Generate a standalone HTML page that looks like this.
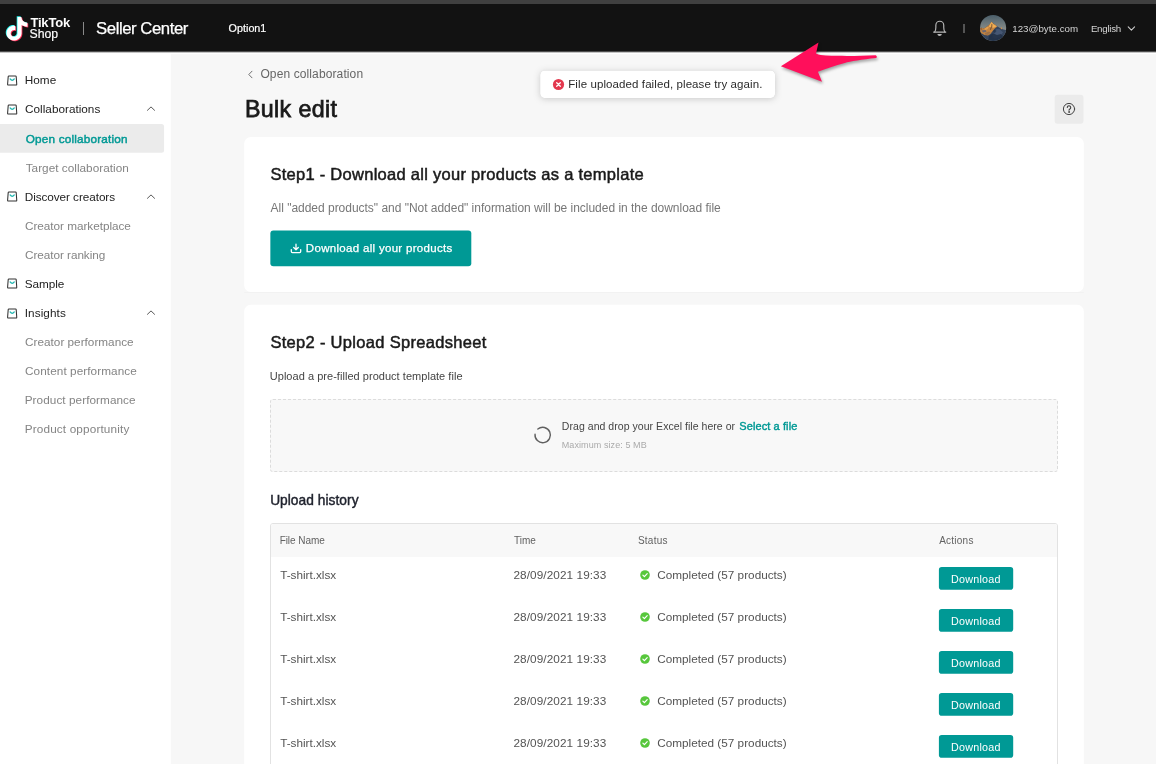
<!DOCTYPE html>
<html lang="en">
<head>
<meta charset="utf-8">
<title>Bulk edit - Seller Center</title>
<style>
*{box-sizing:border-box;margin:0;padding:0}
html,body{width:1156px;height:764px;overflow:hidden}
body{position:relative;background:#fff;font-family:"Liberation Sans",sans-serif;color:#222}
.a{position:absolute}
.t{position:absolute;white-space:pre}
.topstrip{left:0;top:0;width:1156px;height:4px;background:#404040}
.header{left:0;top:4px;width:1156px;height:47.3px;background:#121212}
.hedge{left:0;top:51.3px;width:1156px;height:1.7px;background:linear-gradient(#121212,#fff)}
.sidebar{left:0;top:52px;width:170.8px;height:712px;background:#fff}
.drop{left:270px;top:399px;width:788px;height:73px;background:#f8f8f8;border:1px dashed #dcdcdc;border-radius:3px}
.table{left:270px;top:523px;width:788px;height:260px;border:1px solid #e2e2e2;border-radius:3px;background:#fff;overflow:hidden}
.thead{left:0;top:0;width:100%;height:33px;background:#f8f8f8}
svg{position:absolute;overflow:visible}
</style>
</head>
<body>
<div class="a" style="left:0;top:0;width:1156px;height:764px;overflow:hidden;will-change:transform">
<div class="a topstrip"></div>
<div class="a header"></div>
<div class="a sidebar"></div>
<svg style="left:0;top:0" width="1156" height="764" viewBox="0 0 1156 764">
<rect x="170.8" y="54.15" width="990" height="720" fill="#f7f7f7"/>
<rect x="-6" y="124.1" width="170.05" height="28.6" rx="2.5" fill="#ebebeb"/>
<rect x="244.2" y="137.05" width="839.6" height="154.85" rx="6.5" fill="#fff"/>
<rect x="244.2" y="292.1" width="839.6" height="0.9" fill="#f1f1f1"/>
<rect x="244.2" y="304.8" width="839.6" height="480" rx="6.5" fill="#fff"/>
<rect x="270.35" y="230.4" width="200.95" height="35.8" rx="3" fill="#009995"/>
<rect x="1054.65" y="94.7" width="28.85" height="29.1" rx="3" fill="#ebebeb"/>
</svg>
<div class="a hedge"></div>

<div class="a drop"></div>
<div class="a table"><div class="a thead"></div></div>
<svg style="left:5.3px;top:16.7px" width="24" height="23.5" viewBox="0 0 24 24" preserveAspectRatio="none"><path d="M12.525.02c1.31-.02 2.61-.01 3.91-.02.08 1.53.63 3.09 1.75 4.17 1.12 1.11 2.7 1.62 4.24 1.79v4.03c-1.44-.05-2.89-.35-4.2-.97-.57-.26-1.1-.59-1.62-.93-.01 2.92.01 5.84-.02 8.75-.08 1.4-.54 2.79-1.35 3.94-1.31 1.92-3.58 3.17-5.91 3.21-1.43.08-2.86-.31-4.08-1.03-2.02-1.19-3.44-3.37-3.65-5.71-.02-.5-.03-1-.01-1.49.18-1.9 1.12-3.72 2.58-4.96 1.66-1.44 3.98-2.13 6.15-1.72.02 1.48-.04 2.96-.04 4.44-.99-.32-2.15-.23-3.02.37-.63.41-1.11 1.04-1.36 1.75-.21.51-.15 1.07-.14 1.61.24 1.64 1.82 3.02 3.5 2.87 1.12-.01 2.19-.66 2.77-1.61.19-.33.4-.67.41-1.06.1-1.79.06-3.57.07-5.36.01-4.03-.01-8.05.02-12.07z" fill="#25f4ee" transform="translate(-0.8,-0.7)"/><path d="M12.525.02c1.31-.02 2.61-.01 3.91-.02.08 1.53.63 3.09 1.75 4.17 1.12 1.11 2.7 1.62 4.24 1.79v4.03c-1.44-.05-2.89-.35-4.2-.97-.57-.26-1.1-.59-1.62-.93-.01 2.92.01 5.84-.02 8.75-.08 1.4-.54 2.79-1.35 3.94-1.31 1.92-3.58 3.17-5.91 3.21-1.43.08-2.86-.31-4.08-1.03-2.02-1.19-3.44-3.37-3.65-5.71-.02-.5-.03-1-.01-1.49.18-1.9 1.12-3.72 2.58-4.96 1.66-1.44 3.98-2.13 6.15-1.72.02 1.48-.04 2.96-.04 4.44-.99-.32-2.15-.23-3.02.37-.63.41-1.11 1.04-1.36 1.75-.21.51-.15 1.07-.14 1.61.24 1.64 1.82 3.02 3.5 2.87 1.12-.01 2.19-.66 2.77-1.61.19-.33.4-.67.41-1.06.1-1.79.06-3.57.07-5.36.01-4.03-.01-8.05.02-12.07z" fill="#fe2c55" transform="translate(0.8,0.7)"/><path d="M12.525.02c1.31-.02 2.61-.01 3.91-.02.08 1.53.63 3.09 1.75 4.17 1.12 1.11 2.7 1.62 4.24 1.79v4.03c-1.44-.05-2.89-.35-4.2-.97-.57-.26-1.1-.59-1.62-.93-.01 2.92.01 5.84-.02 8.75-.08 1.4-.54 2.79-1.35 3.94-1.31 1.92-3.58 3.17-5.91 3.21-1.43.08-2.86-.31-4.08-1.03-2.02-1.19-3.44-3.37-3.65-5.71-.02-.5-.03-1-.01-1.49.18-1.9 1.12-3.72 2.58-4.96 1.66-1.44 3.98-2.13 6.15-1.72.02 1.48-.04 2.96-.04 4.44-.99-.32-2.15-.23-3.02.37-.63.41-1.11 1.04-1.36 1.75-.21.51-.15 1.07-.14 1.61.24 1.64 1.82 3.02 3.5 2.87 1.12-.01 2.19-.66 2.77-1.61.19-.33.4-.67.41-1.06.1-1.79.06-3.57.07-5.36.01-4.03-.01-8.05.02-12.07z" fill="#fff"/></svg>
<div class="a" style="left:83px;top:22px;width:1px;height:13px;background:#8a8a8a"></div>
<div class="a" style="left:963.3px;top:24px;width:1.4px;height:8.8px;background:#545454"></div>
<svg style="left:932px;top:20px" width="16" height="17" viewBox="0 0 16 17" fill="none" stroke="#b8b8b8" stroke-width="1.15" stroke-linecap="round" stroke-linejoin="round"><path d="M2.7 12 C3.5 10.8 3.85 9.5 3.85 7.5 V5.2 A3.95 3.95 0 0 1 11.75 5.2 V7.5 C11.75 9.5 12.1 10.8 12.9 12"/><path d="M1.7 12.05 H13.7" stroke-width="1.35"/><path d="M5.3 14 H9.9 Q9.5 15.9 7.6 15.9 Q5.7 15.9 5.3 14Z" fill="#b8b8b8" stroke="none"/></svg>
<svg style="left:980px;top:15.3px" width="26.2" height="26.1" viewBox="0 0 26.2 26.2" preserveAspectRatio="none"><defs><clipPath id="av"><circle cx="13.1" cy="13.1" r="13.1"/></clipPath><linearGradient id="sky" x1="0" y1="0" x2="0" y2="1"><stop offset="0" stop-color="#4a5e6a"/><stop offset="0.58" stop-color="#8c908c"/><stop offset="1" stop-color="#8c908c"/></linearGradient><filter id="avb" x="-10%" y="-10%" width="120%" height="120%"><feGaussianBlur stdDeviation="0.5"/></filter></defs><g clip-path="url(#av)"><rect width="27" height="27" fill="url(#sky)"/><g filter="url(#avb)"><path d="M-1 14 L1.5 12.9 L4 13.5 L7 11.5 L9.5 9.5 L11.6 6.9 L13.5 8.9 L17.5 11.6 L20 13 L21.3 12.8 L22.5 14.2 L27 15.4 V28 H-1Z" fill="#34445d"/><path d="M-1 14 L1.5 12.9 L4 13.5 L7 11.5 L9.5 9.5 L11.6 6.9 L13.4 8.9 L15.2 9.7 L17.4 11.5 L14.8 13.6 L12.5 16.2 L10.4 19 L8 20.6 L4.5 20 L1.5 18.2 L-1 16.5Z" fill="#c5843f"/><path d="M9.8 9.6 L11.6 7 L13.2 9 L16.6 11.3 L13.8 12.8 L11.5 12.4 L8.8 12Z" fill="#f0ae54"/><path d="M4.5 13.6 L7.5 11.8 L9 12.5 L7 14.5 L4.8 15Z" fill="#e3a050"/><path d="M11.4 8.8 L12.5 9.5 L12.2 12 L10.6 15.4 L9.8 14.5 L11.2 11.3Z" fill="#6e4d33" opacity=".8"/><path d="M1.5 15.6 L5.5 15 L6.5 16.8 L3 17.6Z" fill="#59607a" opacity=".85"/><path d="M5 18 L9 16.5 L10.5 17.5 L8 20 L5 19.5Z" fill="#8d6a4d" opacity=".7"/><path d="M0 13.4 L1.6 12.6 L2.5 14.5 L0.5 15.5Z" fill="#8a5e3c" opacity=".8"/><path d="M20.7 12.6 L21.6 12.4 L22 14.2 L20.8 14.1Z" fill="#e29a4c"/><path d="M16 14.2 L19 13.7 L23 17.2 L20 22 L15 24 L12 22 L14 17.2Z" fill="#4d5f7d" opacity=".7"/><path d="M9 21 L13 18.2 L17 20.2 L21 19.2 L24 22 L18 27 L8 27Z" fill="#222e44" opacity=".85"/><path d="M13 16 L15 14.5 L16.5 16 L14.5 18.5Z" fill="#1f2a40" opacity=".6"/></g></g></svg>
<svg style="left:1127px;top:25px" width="9" height="7" viewBox="0 0 9 7" fill="none" stroke="#cfcfcf" stroke-width="1.05" stroke-linecap="round" stroke-linejoin="round"><path d="M1.2 1.9 L4.4 5.1 L7.6 1.9"/></svg>
<svg style="left:6px;top:73.50px" width="13" height="13" viewBox="0 0 13 13" fill="none" stroke-linecap="round" stroke-linejoin="round"><path d="M2.9 1.95 H9.5 Q10.1 1.95 10.2 2.6 L10.75 10.3 Q10.8 11.05 10.1 11.05 H2.3 Q1.55 11.05 1.6 10.3 L2.2 2.6 Q2.3 1.95 2.9 1.95Z" stroke="#333" stroke-width="1.05"/><path d="M4.1 4.9 Q6.2 7.7 8.3 4.9" stroke="#1fb5b0" stroke-width="1.25"/></svg>
<svg style="left:6px;top:102.63px" width="13" height="13" viewBox="0 0 13 13" fill="none" stroke-linecap="round" stroke-linejoin="round"><path d="M2.9 1.95 H9.5 Q10.1 1.95 10.2 2.6 L10.75 10.3 Q10.8 11.05 10.1 11.05 H2.3 Q1.55 11.05 1.6 10.3 L2.2 2.6 Q2.3 1.95 2.9 1.95Z" stroke="#333" stroke-width="1.05"/><path d="M4.1 4.9 Q6.2 7.7 8.3 4.9" stroke="#1fb5b0" stroke-width="1.25"/></svg>
<svg style="left:6px;top:190.02px" width="13" height="13" viewBox="0 0 13 13" fill="none" stroke-linecap="round" stroke-linejoin="round"><path d="M2.9 1.95 H9.5 Q10.1 1.95 10.2 2.6 L10.75 10.3 Q10.8 11.05 10.1 11.05 H2.3 Q1.55 11.05 1.6 10.3 L2.2 2.6 Q2.3 1.95 2.9 1.95Z" stroke="#333" stroke-width="1.05"/><path d="M4.1 4.9 Q6.2 7.7 8.3 4.9" stroke="#1fb5b0" stroke-width="1.25"/></svg>
<svg style="left:6px;top:277.41px" width="13" height="13" viewBox="0 0 13 13" fill="none" stroke-linecap="round" stroke-linejoin="round"><path d="M2.9 1.95 H9.5 Q10.1 1.95 10.2 2.6 L10.75 10.3 Q10.8 11.05 10.1 11.05 H2.3 Q1.55 11.05 1.6 10.3 L2.2 2.6 Q2.3 1.95 2.9 1.95Z" stroke="#333" stroke-width="1.05"/><path d="M4.1 4.9 Q6.2 7.7 8.3 4.9" stroke="#1fb5b0" stroke-width="1.25"/></svg>
<svg style="left:6px;top:306.54px" width="13" height="13" viewBox="0 0 13 13" fill="none" stroke-linecap="round" stroke-linejoin="round"><path d="M2.9 1.95 H9.5 Q10.1 1.95 10.2 2.6 L10.75 10.3 Q10.8 11.05 10.1 11.05 H2.3 Q1.55 11.05 1.6 10.3 L2.2 2.6 Q2.3 1.95 2.9 1.95Z" stroke="#333" stroke-width="1.05"/><path d="M4.1 4.9 Q6.2 7.7 8.3 4.9" stroke="#1fb5b0" stroke-width="1.25"/></svg>
<svg style="left:146.4px;top:105.33px" width="10" height="7" viewBox="0 0 10 7" fill="none" stroke="#585858" stroke-width="1" stroke-linecap="round" stroke-linejoin="round"><path d="M1.45 5.3 L5 1.9 L8.55 5.3"/></svg>
<svg style="left:146.4px;top:192.72px" width="10" height="7" viewBox="0 0 10 7" fill="none" stroke="#585858" stroke-width="1" stroke-linecap="round" stroke-linejoin="round"><path d="M1.45 5.3 L5 1.9 L8.55 5.3"/></svg>
<svg style="left:146.4px;top:309.24px" width="10" height="7" viewBox="0 0 10 7" fill="none" stroke="#585858" stroke-width="1" stroke-linecap="round" stroke-linejoin="round"><path d="M1.45 5.3 L5 1.9 L8.55 5.3"/></svg>
<svg style="left:247px;top:69.5px" width="7" height="9" viewBox="0 0 7 9" fill="none" stroke="#707070" stroke-width="1" stroke-linecap="round" stroke-linejoin="round"><path d="M5 1.2 L1.8 4.5 L5 7.8"/></svg>
<svg style="left:1061.9px;top:102.3px" width="14" height="14" viewBox="0 0 14 14" fill="none" stroke="#444" stroke-width="1" stroke-linecap="round"><circle cx="7" cy="7" r="5.6"/><path d="M5.3 5.5 a1.7 1.7 0 1 1 2.6 1.45 c-.65.4-.9.7-.9 1.35" stroke-width="1.1"/><circle cx="7" cy="10" r=".4" fill="#444"/></svg>
<svg style="left:290px;top:242.5px" width="12" height="11" viewBox="0 0 12 11" fill="none" stroke="#fff" stroke-width="1.3" stroke-linecap="round" stroke-linejoin="round"><path d="M6 1.2 V6.6 M3.7 4.5 L6 6.8 L8.3 4.5"/><path d="M1.3 6.6 V8.6 Q1.3 9.7 2.4 9.7 H9.6 Q10.7 9.7 10.7 8.6 V6.6"/></svg>
<svg style="left:533px;top:426.3px" width="19" height="19" viewBox="0 0 19 19" fill="none" stroke="#606060" stroke-width="1.4" stroke-linecap="round"><path d="M4.85 3.02 A7.7 7.7 0 1 1 2.04 8.2"/></svg>
<svg style="left:639.6px;top:570.05px" width="10" height="10" viewBox="0 0 10 10"><circle cx="5" cy="5" r="4.8" fill="#57c73c"/><path d="M2.9 5.1 L4.4 6.6 L7.2 3.7" fill="none" stroke="#fff" stroke-width="1.2" stroke-linecap="round" stroke-linejoin="round"/></svg>
<svg style="left:938px;top:566px" width="77" height="25" viewBox="0 0 77 25"><rect x="0.9" y="1" width="74.3" height="22.7" rx="2.8" fill="#009995"/></svg>
<svg style="left:639.6px;top:612.05px" width="10" height="10" viewBox="0 0 10 10"><circle cx="5" cy="5" r="4.8" fill="#57c73c"/><path d="M2.9 5.1 L4.4 6.6 L7.2 3.7" fill="none" stroke="#fff" stroke-width="1.2" stroke-linecap="round" stroke-linejoin="round"/></svg>
<svg style="left:938px;top:608px" width="77" height="25" viewBox="0 0 77 25"><rect x="0.9" y="1" width="74.3" height="22.7" rx="2.8" fill="#009995"/></svg>
<svg style="left:639.6px;top:654.05px" width="10" height="10" viewBox="0 0 10 10"><circle cx="5" cy="5" r="4.8" fill="#57c73c"/><path d="M2.9 5.1 L4.4 6.6 L7.2 3.7" fill="none" stroke="#fff" stroke-width="1.2" stroke-linecap="round" stroke-linejoin="round"/></svg>
<svg style="left:938px;top:650px" width="77" height="25" viewBox="0 0 77 25"><rect x="0.9" y="1" width="74.3" height="22.7" rx="2.8" fill="#009995"/></svg>
<svg style="left:639.6px;top:696.05px" width="10" height="10" viewBox="0 0 10 10"><circle cx="5" cy="5" r="4.8" fill="#57c73c"/><path d="M2.9 5.1 L4.4 6.6 L7.2 3.7" fill="none" stroke="#fff" stroke-width="1.2" stroke-linecap="round" stroke-linejoin="round"/></svg>
<svg style="left:938px;top:692px" width="77" height="25" viewBox="0 0 77 25"><rect x="0.9" y="1" width="74.3" height="22.7" rx="2.8" fill="#009995"/></svg>
<svg style="left:639.6px;top:738.05px" width="10" height="10" viewBox="0 0 10 10"><circle cx="5" cy="5" r="4.8" fill="#57c73c"/><path d="M2.9 5.1 L4.4 6.6 L7.2 3.7" fill="none" stroke="#fff" stroke-width="1.2" stroke-linecap="round" stroke-linejoin="round"/></svg>
<svg style="left:938px;top:734px" width="77" height="25" viewBox="0 0 77 25"><rect x="0.9" y="1" width="74.3" height="22.7" rx="2.8" fill="#009995"/></svg>
<svg style="left:0;top:0;filter:drop-shadow(0 1.5px 3.5px rgba(0,0,0,.16)) drop-shadow(0 0 0.6px rgba(0,0,0,.18))" width="1156" height="140" viewBox="0 0 1156 140"><rect x="540.15" y="70.4" width="234.95" height="27.55" rx="4.5" fill="#fff"/></svg>
<svg style="left:553.4px;top:78.5px" width="11" height="11" viewBox="0 0 11 11"><circle cx="5.5" cy="5.5" r="5.6" fill="#e3384e"/><path d="M3.7 3.7 L7.3 7.3 M7.3 3.7 L3.7 7.3" stroke="#fff" stroke-width="1.3" stroke-linecap="round"/></svg>
<svg style="left:770px;top:35px;filter:drop-shadow(1px 2px 1.5px rgba(0,0,0,.35))" width="120" height="55" viewBox="770 35 120 55"><path d="M780.9 66.2 L818.5 42.4 L816 53.6 C819 55 822 55.4 826 55.6 C845 56.2 860 56 875.7 55.2 Q877.6 56.5 876.3 58.1 C862 59.5 850 61.5 844.8 62.9 C835 65.5 826 68.5 817.9 71.8 L822 81.8 Z" fill="#ff0f5b"/></svg>
<div class="t" style="left:30.40px;top:13px;font-size:13px;line-height:19px;letter-spacing:-0.175px;color:#fff;font-weight:700;">TikTok</div>
<div class="t" style="left:29.60px;top:25px;font-size:12.25px;line-height:18px;letter-spacing:-0.021px;color:#fff;-webkit-text-stroke:0.15px #fff;">Shop</div>
<div class="t" style="left:96.09px;top:17px;font-size:16.75px;line-height:24px;letter-spacing:-0.455px;color:#fff;-webkit-text-stroke:0.25px #fff;">Seller Center</div>
<div class="t" style="left:228.60px;top:20px;font-size:10.75px;line-height:16px;letter-spacing:0.017px;color:#fff;-webkit-text-stroke:0.2px #fff;">Option1</div>
<div class="t" style="left:1012.20px;top:21px;font-size:9.75px;line-height:15px;letter-spacing:0.019px;color:#d4d4d4;">123@byte.com</div>
<div class="t" style="left:1090.92px;top:21px;font-size:9.75px;line-height:15px;letter-spacing:-0.287px;color:#d4d4d4;">English</div>
<div class="t" style="left:24.73px;top:71px;font-size:11.75px;line-height:17px;letter-spacing:0.063px;color:#222;">Home</div>
<div class="t" style="left:25.07px;top:100px;font-size:11.75px;line-height:17px;letter-spacing:0.009px;color:#222;">Collaborations</div>
<div class="t" style="left:25.70px;top:130px;font-size:11.75px;line-height:17px;letter-spacing:0.192px;color:#009995;-webkit-text-stroke:0.45px #009995;">Open collaboration</div>
<div class="t" style="left:25.70px;top:159px;font-size:11.75px;line-height:17px;letter-spacing:0.027px;color:#848484;">Target collaboration</div>
<div class="t" style="left:24.73px;top:188px;font-size:11.75px;line-height:17px;letter-spacing:-0.066px;color:#222;">Discover creators</div>
<div class="t" style="left:25.06px;top:217px;font-size:11.75px;line-height:17px;letter-spacing:-0.036px;color:#848484;">Creator marketplace</div>
<div class="t" style="left:25.07px;top:246px;font-size:11.75px;line-height:17px;letter-spacing:-0.056px;color:#848484;">Creator ranking</div>
<div class="t" style="left:24.85px;top:275px;font-size:11.75px;line-height:17px;letter-spacing:-0.061px;color:#222;">Sample</div>
<div class="t" style="left:24.70px;top:304px;font-size:11.75px;line-height:17px;letter-spacing:0.088px;color:#222;">Insights</div>
<div class="t" style="left:25.07px;top:333px;font-size:11.75px;line-height:17px;letter-spacing:0.009px;color:#848484;">Creator performance</div>
<div class="t" style="left:25.06px;top:362px;font-size:11.75px;line-height:17px;letter-spacing:0.076px;color:#848484;">Content performance</div>
<div class="t" style="left:24.73px;top:391px;font-size:11.75px;line-height:17px;letter-spacing:0.062px;color:#848484;">Product performance</div>
<div class="t" style="left:24.73px;top:420px;font-size:11.75px;line-height:17px;letter-spacing:0.147px;color:#848484;">Product opportunity</div>
<div class="t" style="left:260.40px;top:65px;font-size:12.0px;line-height:18px;letter-spacing:0.115px;color:#666;">Open collaboration</div>
<div class="t" style="left:244.90px;top:93px;font-size:23.25px;line-height:32px;letter-spacing:0.362px;color:#1a1a1a;-webkit-text-stroke:0.75px #1a1a1a;">Bulk edit</div>
<div class="t" style="left:270.40px;top:163px;font-size:16.5px;line-height:23px;letter-spacing:0.274px;color:#1a1a1a;-webkit-text-stroke:0.5px #1a1a1a;">Step1 - Download all your products as a template</div>
<div class="t" style="left:270.60px;top:199px;font-size:12.0px;line-height:18px;letter-spacing:-0.022px;color:#777;">All "added products" and "Not added" information will be included in the download file</div>
<div class="t" style="left:305.84px;top:240px;font-size:11.5px;line-height:17px;letter-spacing:0.310px;color:#fff;-webkit-text-stroke:0.25px #fff;">Download all your products</div>
<div class="t" style="left:270.40px;top:331px;font-size:16.5px;line-height:23px;letter-spacing:0.306px;color:#1a1a1a;-webkit-text-stroke:0.5px #1a1a1a;">Step2 - Upload Spreadsheet</div>
<div class="t" style="left:269.76px;top:368px;font-size:11.0px;line-height:16px;letter-spacing:0.035px;color:#444;">Upload a pre-filled product template file</div>
<div class="t" style="left:561.84px;top:418px;font-size:10.5px;line-height:16px;letter-spacing:0.047px;color:#444;">Drag and drop your Excel file here or</div>
<div class="t" style="left:739.25px;top:418px;font-size:11.0px;line-height:16px;letter-spacing:0.099px;color:#009995;-webkit-text-stroke:0.4px #009995;">Select a file</div>
<div class="t" style="left:561.77px;top:438px;font-size:9.0px;line-height:14px;letter-spacing:0.080px;color:#aaa;">Maximum size: 5 MB</div>
<div class="t" style="left:270.14px;top:491px;font-size:13.75px;line-height:20px;letter-spacing:0.038px;color:#20232e;-webkit-text-stroke:0.4px #20232e;">Upload history</div>
<div class="t" style="left:279.67px;top:533px;font-size:10px;line-height:15px;letter-spacing:-0.057px;color:#626262;">File Name</div>
<div class="t" style="left:514.10px;top:533px;font-size:10px;line-height:15px;letter-spacing:-0.061px;color:#626262;">Time</div>
<div class="t" style="left:637.95px;top:533px;font-size:10px;line-height:15px;letter-spacing:0.236px;color:#626262;">Status</div>
<div class="t" style="left:939.20px;top:533px;font-size:10px;line-height:15px;letter-spacing:0.237px;color:#626262;">Actions</div>
<div class="t" style="left:280.20px;top:566px;font-size:11.75px;line-height:17px;letter-spacing:-0.012px;color:#545454;">T-shirt.xlsx</div>
<div class="t" style="left:513.48px;top:566px;font-size:11.75px;line-height:17px;letter-spacing:0.089px;color:#545454;">28/09/2021 19:33</div>
<div class="t" style="left:657.16px;top:566px;font-size:11.75px;line-height:17px;letter-spacing:0.009px;color:#545454;">Completed (57 products)</div>
<div class="t" style="left:950.93px;top:571px;font-size:10.75px;line-height:16px;letter-spacing:0.253px;color:#fff;">Download</div>
<div class="t" style="left:280.20px;top:608px;font-size:11.75px;line-height:17px;letter-spacing:-0.012px;color:#545454;">T-shirt.xlsx</div>
<div class="t" style="left:513.48px;top:608px;font-size:11.75px;line-height:17px;letter-spacing:0.089px;color:#545454;">28/09/2021 19:33</div>
<div class="t" style="left:657.16px;top:608px;font-size:11.75px;line-height:17px;letter-spacing:0.009px;color:#545454;">Completed (57 products)</div>
<div class="t" style="left:950.93px;top:613px;font-size:10.75px;line-height:16px;letter-spacing:0.253px;color:#fff;">Download</div>
<div class="t" style="left:280.20px;top:650px;font-size:11.75px;line-height:17px;letter-spacing:-0.012px;color:#545454;">T-shirt.xlsx</div>
<div class="t" style="left:513.48px;top:650px;font-size:11.75px;line-height:17px;letter-spacing:0.089px;color:#545454;">28/09/2021 19:33</div>
<div class="t" style="left:657.16px;top:650px;font-size:11.75px;line-height:17px;letter-spacing:0.009px;color:#545454;">Completed (57 products)</div>
<div class="t" style="left:950.93px;top:655px;font-size:10.75px;line-height:16px;letter-spacing:0.253px;color:#fff;">Download</div>
<div class="t" style="left:280.20px;top:692px;font-size:11.75px;line-height:17px;letter-spacing:-0.012px;color:#545454;">T-shirt.xlsx</div>
<div class="t" style="left:513.48px;top:692px;font-size:11.75px;line-height:17px;letter-spacing:0.089px;color:#545454;">28/09/2021 19:33</div>
<div class="t" style="left:657.16px;top:692px;font-size:11.75px;line-height:17px;letter-spacing:0.009px;color:#545454;">Completed (57 products)</div>
<div class="t" style="left:950.93px;top:697px;font-size:10.75px;line-height:16px;letter-spacing:0.253px;color:#fff;">Download</div>
<div class="t" style="left:280.20px;top:734px;font-size:11.75px;line-height:17px;letter-spacing:-0.012px;color:#545454;">T-shirt.xlsx</div>
<div class="t" style="left:513.48px;top:734px;font-size:11.75px;line-height:17px;letter-spacing:0.089px;color:#545454;">28/09/2021 19:33</div>
<div class="t" style="left:657.16px;top:734px;font-size:11.75px;line-height:17px;letter-spacing:0.009px;color:#545454;">Completed (57 products)</div>
<div class="t" style="left:950.93px;top:739px;font-size:10.75px;line-height:16px;letter-spacing:0.253px;color:#fff;">Download</div>
<div class="t" style="left:568.26px;top:76px;font-size:11.5px;line-height:17px;letter-spacing:0.096px;color:#2b2b2b;">File uploaded failed, please try again.</div>
</div>
</body>
</html>
